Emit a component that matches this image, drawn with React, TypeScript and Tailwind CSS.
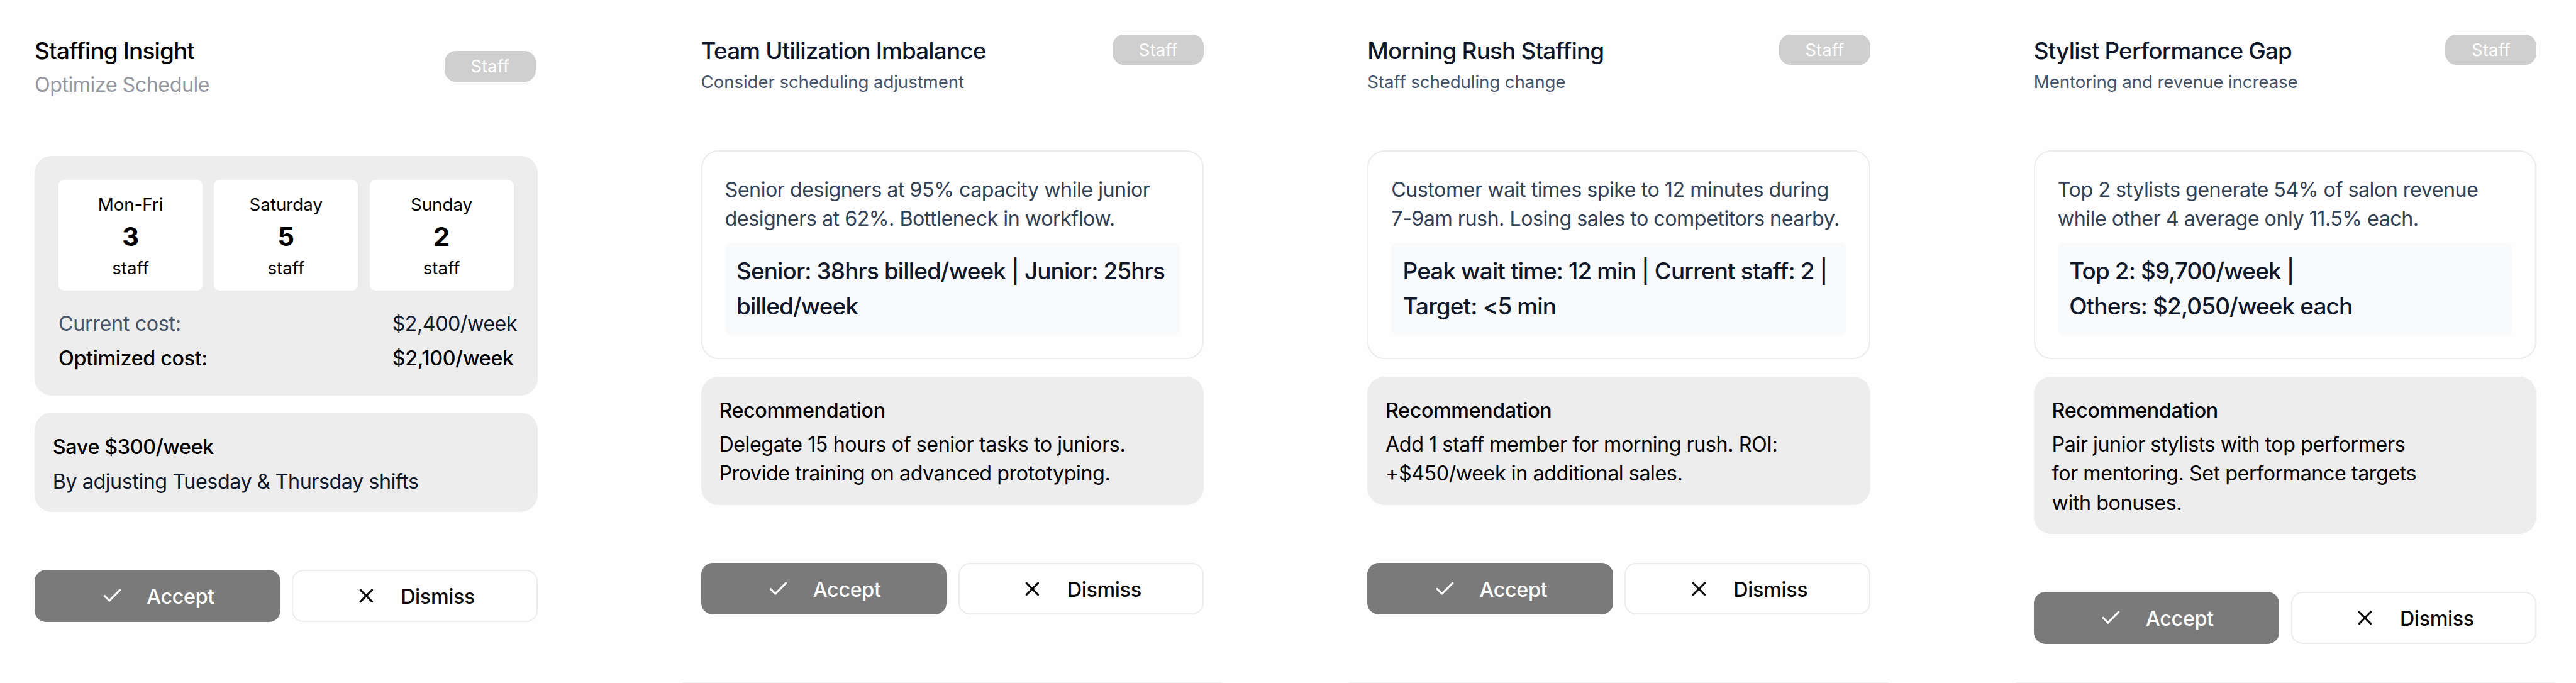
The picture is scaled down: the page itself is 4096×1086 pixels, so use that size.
import React from "react";
import { Check, X } from "lucide-react";

type Insight = {
  title: string;
  subtitle: string;
  summary: string[];
  stats: string[];
  recommendation: string[];
};

const schedule = [
  { day: "Mon-Fri", count: 3 },
  { day: "Saturday", count: 5 },
  { day: "Sunday", count: 2 },
];

const insights: Insight[] = [
  {
    title: "Team Utilization Imbalance",
    subtitle: "Consider scheduling adjustment",
    summary: [
      "Senior designers at 95% capacity while junior",
      "designers at 62%. Bottleneck in workflow.",
    ],
    stats: ["Senior: 38hrs billed/week | Junior: 25hrs", "billed/week"],
    recommendation: [
      "Delegate 15 hours of senior tasks to juniors.",
      "Provide training on advanced prototyping.",
    ],
  },
  {
    title: "Morning Rush Staffing",
    subtitle: "Staff scheduling change",
    summary: [
      "Customer wait times spike to 12 minutes during",
      "7-9am rush. Losing sales to competitors nearby.",
    ],
    stats: ["Peak wait time: 12 min | Current staff: 2 |", "Target: <5 min"],
    recommendation: [
      "Add 1 staff member for morning rush. ROI:",
      "+$450/week in additional sales.",
    ],
  },
  {
    title: "Stylist Performance Gap",
    subtitle: "Mentoring and revenue increase",
    summary: [
      "Top 2 stylists generate 54% of salon revenue",
      "while other 4 average only 11.5% each.",
    ],
    stats: ["Top 2: $9,700/week |", "Others: $2,050/week each"],
    recommendation: [
      "Pair junior stylists with top performers",
      "for mentoring. Set performance targets",
      "with bonuses.",
    ],
  },
];

function Lines({ lines }: { lines: string[] }) {
  return (
    <>
      {lines.map((line) => (
        <span key={line} className="block whitespace-nowrap">
          {line}
        </span>
      ))}
    </>
  );
}

function Badge() {
  return (
    <span className="flex h-[48.5px] w-[145px] items-center justify-center rounded-[18px] bg-[#cfcfcf] pt-[1px] text-[27.7px] text-white">
      Staff
    </span>
  );
}

function Actions() {
  return (
    <div className="mt-[91.7px] grid grid-cols-2 gap-[18.4px] text-[32.3px] font-medium tracking-[-0.011em]">
      <button className="flex h-[82.8px] items-center justify-center gap-[36.8px] rounded-[18.4px] bg-[#7a7a7a] text-white">
        <Check size={36.8} strokeWidth={2} />
        <span className="pt-[3.4px]">Accept</span>
      </button>
      <button className="flex h-[82.8px] items-center justify-center gap-[36.8px] rounded-[18.4px] border-2 border-[#ececec] bg-white text-[#0a0a0a]">
        <X size={36.8} strokeWidth={2} />
        <span className="pt-[3.4px]">Dismiss</span>
      </button>
    </div>
  );
}

function StaffingCard() {
  return (
    <section className="h-[1086px] w-[918px] px-[59.2px] pt-[54.8px]">
      <div className="flex h-[192.8px] justify-between pr-[3px]">
        <div>
          <h2 className="text-[36.9px] leading-[52.4px] font-medium tracking-[-0.0225em] text-black">
            Staffing Insight
          </h2>
          <p className="text-[32.3px] leading-[55px] tracking-[-0.016em] text-[#94979e]">
            Optimize Schedule
          </p>
        </div>
        <div className="pt-[26.6px]">
          <Badge />
        </div>
      </div>

      <div className="h-[381.2px] rounded-[27.6px] bg-[#ededed] px-[38px] pt-[38px]">
        <div className="grid grid-cols-3 gap-[18.2px]">
          {schedule.map((s) => (
            <div
              key={s.day}
              className="flex h-[176.9px] flex-col items-center rounded-[9.2px] bg-white pt-[21px] text-black"
            >
              <p className="text-[27.7px] leading-[37px]">{s.day}</p>
              <p className="text-[41.5px] leading-[64.5px] font-bold">
                {s.count}
              </p>
              <p className="text-[27.7px] leading-[37px]">staff</p>
            </div>
          ))}
        </div>
        <div className="mt-[24.5px] grid grid-cols-[1fr_193px] text-[32.3px] leading-[55.3px] tracking-[-0.016em] whitespace-nowrap">
          <span className="tracking-[-0.011em] text-[#475569]">
            Current cost:
          </span>
          <span className="text-[#0f172a]">$2,400/week</span>
          <span className="font-medium tracking-[-0.011em] text-black">
            Optimized cost:
          </span>
          <span className="font-medium tracking-[-0.011em] text-black">
            $2,100/week
          </span>
        </div>
      </div>

      <div className="mt-[27.7px] h-[158px] rounded-[27.6px] bg-[#ededed] px-[28.8px] pt-[26.3px] text-[32.3px] leading-[55.3px]">
        <p className="font-medium tracking-[-0.011em] text-black">
          Save $300/week
        </p>
        <p className="tracking-[-0.0145em] text-[#0f172a]">
          By adjusting Tuesday &amp; Thursday shifts
        </p>
      </div>

      <Actions />
    </section>
  );
}

function InsightCard({ insight }: { insight: Insight }) {
  const { title, subtitle, summary, stats, recommendation } = insight;

  return (
    <section className="flex h-[1086px] w-[918px] flex-col px-[30px] pt-[54.8px]">
      <div className="px-[29.2px]">
        <div className="flex h-[183.9px] justify-between">
          <div>
            <h2 className="text-[36.9px] leading-[52.4px] font-medium tracking-[-0.0225em] text-[#0f172a]">
              {title}
            </h2>
            <p className="text-[27.7px] leading-[46px] tracking-[-0.004em] text-[#475569]">
              {subtitle}
            </p>
          </div>
          <Badge />
        </div>

        <div className="h-[332.4px] rounded-[27.6px] border-2 border-[#ececec] px-[36px] pt-[38px]">
          <p className="text-[32.3px] leading-[46.1px] tracking-[-0.016em] text-[#334155]">
            <Lines lines={summary} />
          </p>
          <div className="mt-[15.4px] h-[146.7px] rounded-[9.2px] bg-[#f8fafc] px-[18.4px] pt-[17px] text-[36.9px] leading-[55.3px] font-medium tracking-[-0.0235em] text-[#0f172a]">
            <Lines lines={stats} />
          </div>
        </div>

        <div className="mt-[27.7px] rounded-[27.6px] bg-[#ededed] px-[28.8px] pt-[26.3px] pb-[26.4px] text-[32.3px] text-black">
          <h3 className="leading-[55.3px] font-medium tracking-[-0.012em]">
            Recommendation
          </h3>
          <p className="mt-[4px] leading-[46.1px] tracking-[-0.0142em]">
            <Lines lines={recommendation} />
          </p>
        </div>

        <Actions />
      </div>

      <div className="mt-auto h-px bg-[#f2f2f2]" />
    </section>
  );
}

export default function App() {
  return (
    <main className="h-[1086px] w-[4096px] overflow-hidden bg-[#fefefe] font-['Inter',sans-serif]">
      <div className="-ml-[4.2px] grid grid-cols-[repeat(4,918px)] gap-[141.6px]">
        <StaffingCard />
        {insights.map((insight) => (
          <InsightCard key={insight.title} insight={insight} />
        ))}
      </div>
    </main>
  );
}
